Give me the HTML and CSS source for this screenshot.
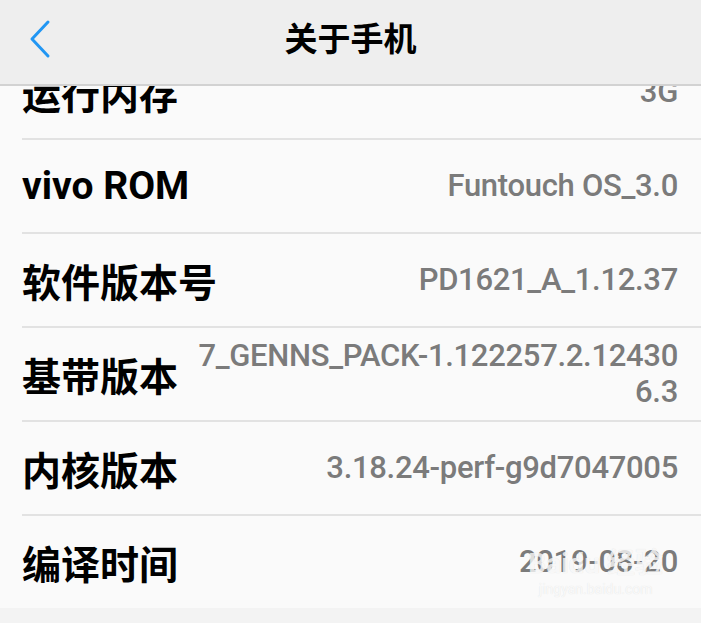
FILE: index.html
```html
<!DOCTYPE html>
<html>
<head>
    <meta charset="UTF-8">
    <title>关于手机</title>
    <meta name="viewport" content="width=device-width, initial-scale=1.0">
    <link rel="stylesheet" href="styles.css">
</head>
<body>
    <div class="topbar">
        <div class="back">
            <svg width="24" height="40" viewBox="0 0 24 40">
                <polyline points="19,3 3,20 19,37" fill="none" stroke="#2196f3" stroke-width="3" stroke-linecap="round" stroke-linejoin="round"/>
            </svg>
        </div>
        <h1 class="title">关于手机</h1>
        <div></div>
    </div>

    <div class="list">
        <div class="row">
            <span class="label">运行内存</span>
            <span class="value">3G</span>
        </div>
        <div class="row">
            <span class="label">vivo ROM</span>
            <span class="value">Funtouch OS_3.0</span>
        </div>
        <div class="row">
            <span class="label">软件版本号</span>
            <span class="value">PD1621_A_1.12.37</span>
        </div>
        <div class="row">
            <span class="label">基带版本</span>
            <span class="value">7_GENNS_PACK-1.122257.2.12430<wbr>6.3</span>
        </div>
        <div class="row">
            <span class="label">内核版本</span>
            <span class="value">3.18.24-perf-g9d7047005</span>
        </div>
        <div class="row last">
            <span class="label">编译时间</span>
            <span class="value">2019-08-20</span>
            <div class="watermark">
                <span class="wm-logo">Baidu 经验</span>
                <span class="wm-url">jingyan.baidu.com</span>
            </div>
        </div>
    </div>
</body>
</html>
```

FILE: styles.css
```css
body {
    margin: 0;
    background-color: #f3f3f3;
    font-family: Roboto, "Noto Sans CJK SC", sans-serif;
}
.topbar {
    position: fixed;
    top: 0;
    left: 0;
    right: 0;
    z-index: 2;
    height: 84px;
    display: grid;
    grid-template-columns: 1fr auto 1fr;
    align-items: center;
    background-color: #eeeeee;
    border-bottom: 2px solid #d2d2d2;
}
.back {
    padding-left: 29px;
    padding-bottom: 6px;
    display: flex;
}
.title {
    margin: 0;
    padding-bottom: 10px;
    font-size: 33px;
    font-weight: bold;
    color: #000;
}
.list {
    margin-top: 46px;
    background-color: #fafafa;
}
.row {
    position: relative;
    height: 92px;
    margin-left: 22px;
    padding-right: 23px;
    display: flex;
    align-items: center;
    justify-content: space-between;
    border-bottom: 2px solid #e2e2e2;
}
.row.last {
    border-bottom: none;
}
.label {
    flex-shrink: 0;
    font-size: 39px;
    font-weight: bold;
    color: #000;
}
.value {
    margin-left: 14px;
    text-align: right;
    font-size: 31px;
    font-weight: 500;
    letter-spacing: -0.3px;
    line-height: 36px;
    color: #7b7b7b;
}
.watermark {
    position: absolute;
    right: 38px;
    top: 32px;
    display: flex;
    flex-direction: column;
    align-items: center;
    color: rgba(255, 255, 255, 0.8);
    text-shadow: 0 0 1px rgba(0, 0, 0, 0.12);
    pointer-events: none;
}
.wm-logo {
    font-size: 28px;
    font-weight: bold;
    line-height: 32px;
}
.wm-url {
    font-size: 14px;
    line-height: 18px;
}
```
